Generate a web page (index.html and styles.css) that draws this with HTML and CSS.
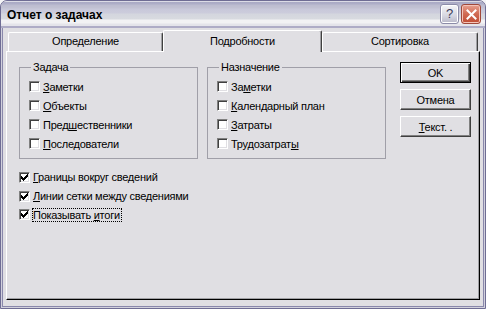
FILE: index.html
```html
<!DOCTYPE html>
<html lang="ru">
<head>
<meta charset="utf-8">
<title>Отчет о задачах</title>
<link rel="stylesheet" href="styles.css">
</head>
<body>
<div class="window">
  <div class="titlebar">
    <span class="title">Отчет о задачах</span>
    <div class="caption-buttons">
      <span class="cap help">?</span>
      <span class="cap close"><svg width="11" height="11" viewBox="0 0 11 11"><path d="M1.5 1.5L9.5 9.5M9.5 1.5L1.5 9.5" stroke="#fff" stroke-width="2" stroke-linecap="square"/></svg></span>
    </div>
  </div>
  <div class="dlg-body">
    <div class="tabs">
      <div class="tab t1">Определение</div>
      <div class="tab t2 active">Подробности</div>
      <div class="tab t3">Сортировка</div>
    </div>
    <div class="panel">
      <div class="top-row">
        <fieldset class="group g1">
          <legend>Задача</legend>
          <div class="check"><span class="box"></span><span class="label"><u>З</u>аметки</span></div>
          <div class="check"><span class="box"></span><span class="label"><u>О</u>бъекты</span></div>
          <div class="check"><span class="box"></span><span class="label">Пред<u>ш</u>ественники</span></div>
          <div class="check"><span class="box"></span><span class="label"><u>П</u>оследователи</span></div>
        </fieldset>
        <fieldset class="group g2">
          <legend>Назначение</legend>
          <div class="check"><span class="box"></span><span class="label">За<u>м</u>етки</span></div>
          <div class="check"><span class="box"></span><span class="label"><u>К</u>алендарный план</span></div>
          <div class="check"><span class="box"></span><span class="label"><u>З</u>атраты</span></div>
          <div class="check"><span class="box"></span><span class="label">Трудозатрат<u>ы</u></span></div>
        </fieldset>
        <div class="buttons">
          <div class="btn default">OK</div>
          <div class="btn">Отмена</div>
          <div class="btn"><span><u>Т</u>екст. .</span></div>
        </div>
      </div>
      <div class="options">
        <div class="check"><span class="box"><svg class="tick" width="7" height="7" viewBox="0 0 7 7"><path d="M6 0h1v1h-1zM5 1h2v1h-2zM0 2h1v1h-1zM4 2h3v1h-3zM0 3h2v1h-2zM3 3h3v1h-3zM0 4h5v1h-5zM1 5h3v1h-3zM2 6h1v1h-1z" fill="#000"/></svg></span><span class="label"><u>Г</u>раницы вокруг сведений</span></div>
        <div class="check"><span class="box"><svg class="tick" width="7" height="7" viewBox="0 0 7 7"><path d="M6 0h1v1h-1zM5 1h2v1h-2zM0 2h1v1h-1zM4 2h3v1h-3zM0 3h2v1h-2zM3 3h3v1h-3zM0 4h5v1h-5zM1 5h3v1h-3zM2 6h1v1h-1z" fill="#000"/></svg></span><span class="label"><u>Л</u>инии сетки между сведениями</span></div>
        <div class="check"><span class="box"><svg class="tick" width="7" height="7" viewBox="0 0 7 7"><path d="M6 0h1v1h-1zM5 1h2v1h-2zM0 2h1v1h-1zM4 2h3v1h-3zM0 3h2v1h-2zM3 3h3v1h-3zM0 4h5v1h-5zM1 5h3v1h-3zM2 6h1v1h-1z" fill="#000"/></svg></span><span class="label focused">Показывать <u>и</u>тоги</span></div>
      </div>
    </div>
  </div>
</div>
</body>
</html>
```

FILE: styles.css
```css
* { box-sizing: border-box; }
html, body { margin: 0; padding: 0; }
body {
  width: 486px;
  height: 309px;
  background: #f4f4f6;
  font-family: "Liberation Sans", Arial, sans-serif;
  font-size: 11px;
  letter-spacing: -0.25px;
  color: #000;
  overflow: hidden;
}
.window {
  width: 486px;
  height: 309px;
  display: flex;
  flex-direction: column;
  border: 1px solid #6f6d94;
  border-radius: 7px 7px 0 0;
  background: #e0dfe3;
  box-shadow: inset 0 0 0 1px #d2d1dd, inset 0 0 0 2px #8a88ab;
  overflow: hidden;
}
.titlebar {
  flex: none;
  height: 27px;
  display: flex;
  align-items: flex-start;
  padding: 3px 4px 0 6px;
  border-bottom: 2px solid #aeacc6;
  background: linear-gradient(to bottom, #dcdce6 0px, #dcdce6 1px, #a9a9c4 1px, #aeaec8 3px, #bcbccf 4px, #c2c2d3 7px, #c8c8da 8px, #ccccdc 12px, #d4d6de 13px, #d8dae0 18px, #f2f2f4 19px, #f2f2f4 22px, #e4e4ea 23px, #e4e4ea 25px);
}
.title {
  flex: 1;
  font-weight: bold;
  font-size: 12px;
  line-height: 14px;
  margin-top: 4px;
  letter-spacing: 0;
  color: #000;
}
.caption-buttons {
  display: flex;
  gap: 2px;
}
.cap {
  width: 19px;
  height: 20px;
  border-radius: 3px;
  display: flex;
  align-items: center;
  justify-content: center;
}
.help {
  border: 1px solid #8c8ca8;
  box-shadow: inset 0 0 0 1px #fff;
  background: linear-gradient(to bottom, #f6f6f8, #d6d6e0 60%, #b8b8c8);
  color: #3a3a58;
  font-size: 13px;
  line-height: 14px;
}
.close {
  width: 20px;
  border: 1px solid #a0483a;
  box-shadow: inset 0 0 0 1px #f4c4b8;
  background: linear-gradient(to bottom, #e8a090, #d06a52 50%, #c04c34);
}
.dlg-body {
  flex: 1;
  display: flex;
  flex-direction: column;
  margin: 0 2px 2px;
  padding: 2px 3px 6px;
  background: #e0dfe3;
}
.tabs {
  flex: none;
  height: 21px;
  display: flex;
  align-items: flex-start;
  padding-left: 2px;
}
.tab {
  height: 19px;
  margin-top: 2px;
  border-top: 1px solid #fff;
  border-left: 1px solid #fff;
  border-right: 1px solid #404040;
  box-shadow: inset -1px 0 0 #a0a0a4;
  border-radius: 2px 2px 0 0;
  text-align: center;
  line-height: 13px;
  padding-top: 2px;
  background: #e0dfe3;
}
.t1 { width: 155px; }
.t2 { width: 159px; }
.t3 { width: 156px; }
.tab.active {
  height: 22px;
  margin-top: 0;
  margin-bottom: -1px;
  padding-top: 4px;
  position: relative;
  z-index: 1;
}
.panel {
  flex: 1;
  border-top: 1px solid #fff;
  border-left: 1px solid #fff;
  border-right: 1px solid #000;
  border-bottom: 1px solid #000;
  box-shadow: inset -1px -1px 0 #a0a0a4;
  padding: 9px 0 0 12px;
}
.top-row {
  display: flex;
  align-items: flex-start;
}
.group {
  width: 179px;
  height: 98px;
  margin: 0;
  padding: 3px 0 0 9px;
  border: 1px solid #a09fa8;
  min-width: 0;
}
.g1 { margin-right: 9px; }
.g2 { margin-right: 14px; }
.group legend {
  padding: 0 2px;
  margin-left: 2px;
  line-height: 13px;
}
.check {
  display: flex;
  align-items: center;
  height: 19px;
}
.options .check { height: 18.7px; }
.box {
  flex: none;
  width: 11px;
  height: 11px;
  border: 1px solid;
  border-color: #808080 #fff #fff #808080;
  box-shadow: inset 1px 1px 0 #404040, inset -1px -1px 0 #e0dfe3;
  background: #fff;
  display: flex;
  align-items: center;
  justify-content: center;
}
.tick { display: block; shape-rendering: crispEdges; }
.label {
  margin-left: 2px;
  padding-right: 1px;
  border: 1px dotted transparent;
  line-height: 12px;
  white-space: nowrap;
}
.label.focused { border-color: #000; }
u { text-underline-offset: 1px; }
.buttons {
  display: flex;
  flex-direction: column;
  gap: 6px;
  margin-top: 1px;
}
.btn {
  width: 71px;
  height: 21px;
  display: flex;
  align-items: center;
  justify-content: center;
  border: 1px solid;
  border-color: #fff #404040 #404040 #fff;
  box-shadow: inset -1px -1px 0 #808080;
  background: #e0dfe3;
}
.btn.default {
  border: 1px solid #000;
  box-shadow: inset 1px 1px 0 #fff, inset -1px -1px 0 #404040, inset -2px -2px 0 #808080;
}
.options {
  margin-top: 9px;
  display: flex;
  flex-direction: column;
}
```
